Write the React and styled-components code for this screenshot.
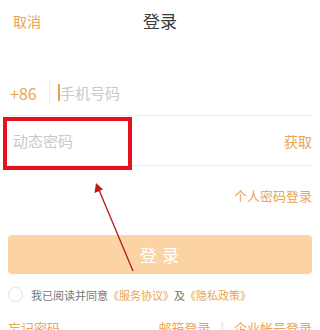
import React from "react";
import styled, { createGlobalStyle } from "styled-components";

const Global = createGlobalStyle`
  html, body { margin: 0; padding: 0; background: #fff; }
  body { font-family: "Noto Sans CJK SC", "Noto Sans", sans-serif; overflow: hidden; }
  * { box-sizing: border-box; }
`;

const ORANGE = "#e9a454";

const Page = styled.div`
  position: relative;
  width: 320px;
  height: 330px;
  overflow: hidden;
`;

const Header = styled.div`
  display: grid;
  grid-template-columns: 1fr auto 1fr;
  align-items: center;
  height: 41px;
  padding: 0 13px;
`;

const HeaderLink = styled.span`
  font-size: 14px;
  color: ${ORANGE};
`;

const Title = styled.span`
  font-size: 17px;
  color: #3a3a3a;
`;

const Form = styled.div`
  padding: 0 8px;
  margin-top: 29px;
`;

const Row = styled.div`
  display: flex;
  align-items: center;
  height: ${(p) => p.$h}px;
  border-bottom: 1px solid #ececec;
`;

const Prefix = styled.span`
  font-size: 16px;
  color: ${ORANGE};
  padding-left: 2px;
  width: 41px;
`;

const VDivider = styled.span`
  width: 1px;
  height: 23px;
  background: #ececec;
  margin-right: 8px;
`;

const Caret = styled.span`
  width: 2px;
  height: 17px;
  background: #e5a04a;
  margin-right: 0;
`;

const Placeholder = styled.span`
  flex: 1;
  font-size: 15px;
  color: #c9c9c9;
  padding-left: ${(p) => p.$pad || 0}px;
`;

const Action = styled.span`
  font-size: 14px;
  color: ${ORANGE};
`;

const LinkRow = styled.div`
  display: flex;
  justify-content: flex-end;
  align-items: center;
  height: 58px;
  font-size: 13px;
  color: ${ORANGE};
`;

const Button = styled.div`
  margin-top: 11px;
  height: 39px;
  border-radius: 4px;
  background: #fcd3a3;
  color: #fff;
  font-size: 17px;
  letter-spacing: 5px;
  display: flex;
  align-items: center;
  justify-content: center;
  padding-left: 4px;
`;

const Agree = styled.div`
  display: flex;
  align-items: center;
  margin-top: 13px;
  height: 15px;
  font-size: 11px;
  color: #777;
`;

const Circle = styled.span`
  width: 15px;
  height: 15px;
  border-radius: 50%;
  border: 1px solid #e2e2e2;
  margin-right: 8px;
`;

const Orange = styled.span`
  color: ${ORANGE};
`;

const Bottom = styled.div`
  display: flex;
  justify-content: space-between;
  align-items: flex-start;
  margin-top: 18px;
  font-size: 13px;
  line-height: 16px;
  color: ${ORANGE};
`;

const Sep = styled.span`
  color: #ddd;
  margin: 0 10px;
`;

const Highlight = styled.div`
  position: absolute;
  left: 3px;
  top: 117px;
  width: 129px;
  height: 53px;
  border: 4px solid #e3121b;
`;

const Arrow = styled.svg`
  position: absolute;
  left: 0;
  top: 0;
  pointer-events: none;
`;

export default function App() {
  return (
    <Page>
      <Global />
      <Header>
        <HeaderLink>取消</HeaderLink>
        <Title>登录</Title>
        <span />
      </Header>
      <Form>
        <Row $h={46}>
          <Prefix>+86</Prefix>
          <VDivider />
          <Caret />
          <Placeholder>手机号码</Placeholder>
        </Row>
        <Row $h={50}>
          <Placeholder $pad={5}>动态密码</Placeholder>
          <Action>获取</Action>
        </Row>
        <LinkRow>个人密码登录</LinkRow>
        <Button>登录</Button>
        <Agree>
          <Circle />
          <span>
            我已阅读并同意<Orange>《服务协议》</Orange>及<Orange>《隐私政策》</Orange>
          </span>
        </Agree>
        <Bottom>
          <span>忘记密码</span>
          <span>
            邮箱登录<Sep>|</Sep>企业帐号登录
          </span>
        </Bottom>
      </Form>
      <Highlight />
      <Arrow width="320" height="330" viewBox="0 0 320 330">
        <line x1="133" y1="271" x2="99" y2="190" stroke="#b5161d" strokeWidth="1.3" />
        <polygon points="96,183 94.5,193 103,189.5" fill="#c8141c" />
      </Arrow>
    </Page>
  );
}
